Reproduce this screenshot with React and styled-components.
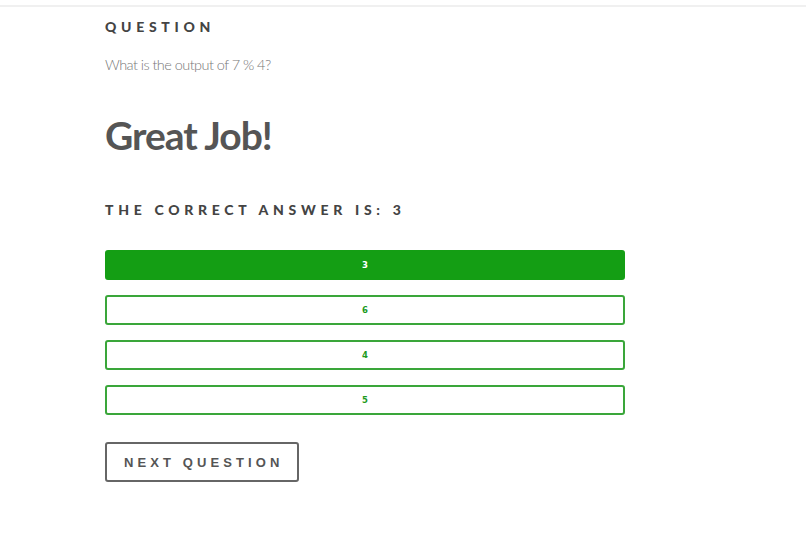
import React from "react";
import styled, { createGlobalStyle } from "styled-components";

const Global = createGlobalStyle`
  html, body { margin: 0; padding: 0; background: #fff; }
  body { font-family: "Lato", "Open Sans", sans-serif; }
`;

const Page = styled.div`
  width: 806px;
  min-height: 537px;
  background: #fff;
`;

const TopRule = styled.div`
  height: 5px;
  border-bottom: 2px solid #f0f0f0;
`;

const Content = styled.main`
  width: 520px;
  margin-left: 105px;
  display: flex;
  flex-direction: column;
`;

const Label = styled.h3`
  margin: ${(p) => p.$mt}px 0 0;
  font-family: "Lato", sans-serif;
  font-weight: 900;
  font-size: 14px;
  line-height: 20px;
  letter-spacing: 4.7px;
  color: #444;
  text-transform: uppercase;
`;

const QuestionText = styled.p`
  margin: 18px 0 0;
  font-family: "Lato", sans-serif;
  font-weight: 300;
  font-size: 14.5px;
  line-height: 20px;
  letter-spacing: -0.55px;
  color: #777;
`;

const Title = styled.h1`
  margin: 35px 0 0;
  font-family: "Lato", sans-serif;
  font-weight: 700;
  font-size: 39px;
  line-height: 50px;
  letter-spacing: -1px;
  color: #555;
`;

const Answers = styled.div`
  margin-top: 30px;
  display: flex;
  flex-direction: column;
  gap: 15px;
`;

const Answer = styled.button`
  height: 30px;
  width: 520px;
  box-sizing: border-box;
  border: 2px solid ${(p) => (p.$correct ? "#149e14" : "#3aa63a")};
  border-radius: 3px;
  background: ${(p) => (p.$correct ? "#149e14" : "#fff")};
  color: ${(p) => (p.$correct ? "#fff" : "#1e9a1e")};
  font-family: "DejaVu Sans", Verdana, sans-serif;
  font-weight: 700;
  font-size: 8.5px;
  padding: 0;
  cursor: pointer;
`;

const NextButton = styled.button`
  margin-top: 27px;
  align-self: flex-start;
  height: 40px;
  box-sizing: border-box;
  border: 2px solid #666;
  border-radius: 3px;
  background: #fff;
  padding: 0 14px 0 17px;
  font-family: "Liberation Sans", Arial, sans-serif;
  font-weight: 700;
  font-size: 13px;
  letter-spacing: 4.1px;
  color: #555;
  cursor: pointer;
`;

const answers = [
  { v: "3", correct: true },
  { v: "6" },
  { v: "4" },
  { v: "5" },
];

export default function App() {
  return (
    <Page>
      <Global />
      <TopRule />
      <Content>
        <Label $mt={10}>Question</Label>
        <QuestionText>What is the output of 7 % 4?</QuestionText>
        <Title>Great Job!</Title>
        <Label $mt={40}>The correct answer is: 3</Label>
        <Answers>
          {answers.map((a) => (
            <Answer key={a.v} $correct={a.correct}>
              {a.v}
            </Answer>
          ))}
        </Answers>
        <NextButton>NEXT QUESTION</NextButton>
      </Content>
    </Page>
  );
}
